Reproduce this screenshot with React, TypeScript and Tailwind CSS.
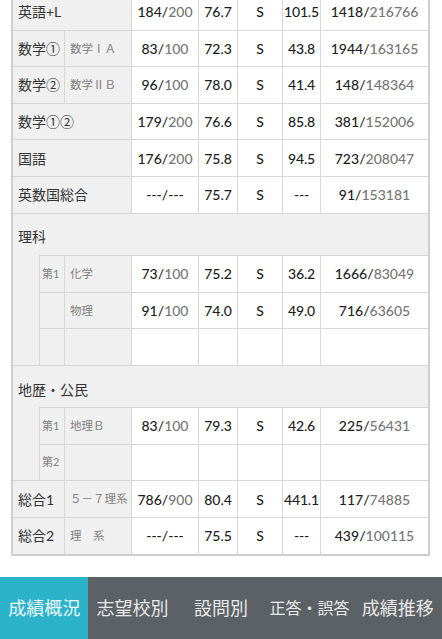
import React from "react";

const font = "font-['Lato','Noto_Sans_CJK_JP',sans-serif]";

type D = { score?: React.ReactNode; dev?: string; grade?: string; f?: string; rank?: React.ReactNode };

function Frac({ a, b, dim = true }: { a: string; b: string; dim?: boolean }) {
  return (
    <span className="whitespace-nowrap">
      <span className="text-[#1e1e1e]">{a}/</span>
      <span className={dim ? "text-[#767676]" : "text-[#1e1e1e]"}>{b}</span>
    </span>
  );
}

function CJK({ children }: { children: React.ReactNode }) {
  return <span className="font-['Noto_Sans_CJK_JP',sans-serif]">{children}</span>;
}

function DataCells({ score, dev, grade, f, rank }: D) {
  const c = "shrink-0 border-l border-[#d6d6d6] bg-white flex items-center justify-center text-[14px] font-medium text-[#1e1e1e]";
  return (
    <>
      <div className={`${c} w-[67px]`}>{score}</div>
      <div className={`${c} w-[39px]`}>{dev}</div>
      <div className={`${c} w-[45px]`}>{grade}</div>
      <div className={`${c} w-[38px] tracking-[-0.2px]`}>{f}</div>
      <div className={`${c} flex-1`}>{rank}</div>
    </>
  );
}

function FullRow({ label, ...d }: { label: React.ReactNode } & D) {
  return (
    <div className="flex h-[36.6px] border-t border-[#d6d6d6]">
      <div className="w-[118px] shrink-0 bg-[#f0f0f0] flex items-center pl-[5px] text-[14px] text-[#333]">{label}</div>
      <DataCells {...d} />
    </div>
  );
}

function SplitRow({ label, sub, ...d }: { label: React.ReactNode; sub?: string } & D) {
  return (
    <div className="flex h-[36.6px] border-t border-[#d6d6d6]">
      <div className="w-[51px] shrink-0 bg-[#f0f0f0] flex items-center pl-[5px] text-[14px] text-[#333] whitespace-nowrap">{label}</div>
      <div className="w-[67px] shrink-0 bg-[#f0f0f0] border-l border-[#d6d6d6] flex items-center pl-[5px] text-[11.5px] text-[#808080] whitespace-nowrap">{sub}</div>
      <DataCells {...d} />
    </div>
  );
}

function NestRow({ no, sub, ...d }: { no?: string; sub?: string } & D) {
  return (
    <div className="flex h-[36.6px] border-t border-[#d6d6d6]">
      <div className="w-[25px] shrink-0 bg-[#f0f0f0] border-l border-[#d6d6d6] flex items-center pl-[2px] text-[11px] text-[#808080] whitespace-nowrap">{no}</div>
      <div className="w-[67px] shrink-0 bg-[#f0f0f0] border-l border-[#d6d6d6] flex items-center pl-[5px] text-[11.5px] text-[#808080] whitespace-nowrap">{sub}</div>
      <DataCells {...d} />
    </div>
  );
}

function Section({ title, pt, children }: { title: string; pt: string; children: React.ReactNode }) {
  return (
    <div className="border-t border-[#d6d6d6] bg-[#f0f0f0]">
      <div className={`h-[41.4px] flex items-center pl-[5px] text-[14px] text-[#333] ${pt}`}>{title}</div>
      <div className="flex">
        <div className="w-[26px] shrink-0" />
        <div className="flex-1 flex flex-col">{children}</div>
      </div>
    </div>
  );
}

export default function App() {
  const tabs = [
    { t: "成績概況", active: true, s: "text-[18px]" },
    { t: "志望校別", s: "text-[18px]" },
    { t: "設問別", s: "text-[18px]" },
    { t: "正答・誤答", s: "text-[16px]" },
    { t: "成績推移", s: "text-[18px]" },
  ];
  return (
    <div className={`${font} w-[442px] h-[639px] flex flex-col bg-white overflow-hidden`}>
      <div className="flex-1 overflow-hidden">
        <div className="mt-[-7px] ml-[11px] w-[419px] border-x-2 border-b-2 border-[#cfcfcf]">
          <FullRow label="英語+L" score={<Frac a="184" b="200" />} dev="76.7" grade="S" f="101.5" rank={<Frac a="1418" b="216766" />} />
          <SplitRow label={<CJK>数学①</CJK>} sub="数学ⅠＡ" score={<Frac a="83" b="100" />} dev="72.3" grade="S" f="43.8" rank={<Frac a="1944" b="163165" />} />
          <SplitRow label={<CJK>数学②</CJK>} sub="数学ⅡＢ" score={<Frac a="96" b="100" />} dev="78.0" grade="S" f="41.4" rank={<Frac a="148" b="148364" />} />
          <FullRow label={<CJK>数学①②</CJK>} score={<Frac a="179" b="200" />} dev="76.6" grade="S" f="85.8" rank={<Frac a="381" b="152006" />} />
          <FullRow label="国語" score={<Frac a="176" b="200" />} dev="75.8" grade="S" f="94.5" rank={<Frac a="723" b="208047" />} />
          <FullRow label="英数国総合" score={<Frac a="---" b="---" dim={false} />} dev="75.7" grade="S" f="---" rank={<Frac a="91" b="153181" />} />
          <Section title="理科" pt="pt-[5px]">
            <NestRow no="第1" sub="化学" score={<Frac a="73" b="100" />} dev="75.2" grade="S" f="36.2" rank={<Frac a="1666" b="83049" />} />
            <NestRow sub="物理" score={<Frac a="91" b="100" />} dev="74.0" grade="S" f="49.0" rank={<Frac a="716" b="63605" />} />
            <NestRow />
          </Section>
          <Section title="地歴・公民" pt="pt-[6px]">
            <NestRow no="第1" sub="地理Ｂ" score={<Frac a="83" b="100" />} dev="79.3" grade="S" f="42.6" rank={<Frac a="225" b="56431" />} />
            <NestRow no="第2" />
          </Section>
          <SplitRow label="総合1" sub="５－７理系" score={<Frac a="786" b="900" />} dev="80.4" grade="S" f="441.1" rank={<Frac a="117" b="74885" />} />
          <SplitRow label="総合2" sub="理　系" score={<Frac a="---" b="---" dim={false} />} dev="75.5" grade="S" f="---" rank={<Frac a="439" b="100115" />} />
        </div>
      </div>
      <div className="h-[62px] shrink-0 flex">
        {tabs.map((x) => (
          <div
            key={x.t}
            className={`flex-1 flex items-center justify-center whitespace-nowrap ${x.s} ${
              x.active ? "bg-[#2cb3ca] text-[#eaf7fa]" : "bg-[#5b6165] text-[#e8e8e8]"
            }`}
          >
            {x.t}
          </div>
        ))}
      </div>
    </div>
  );
}
